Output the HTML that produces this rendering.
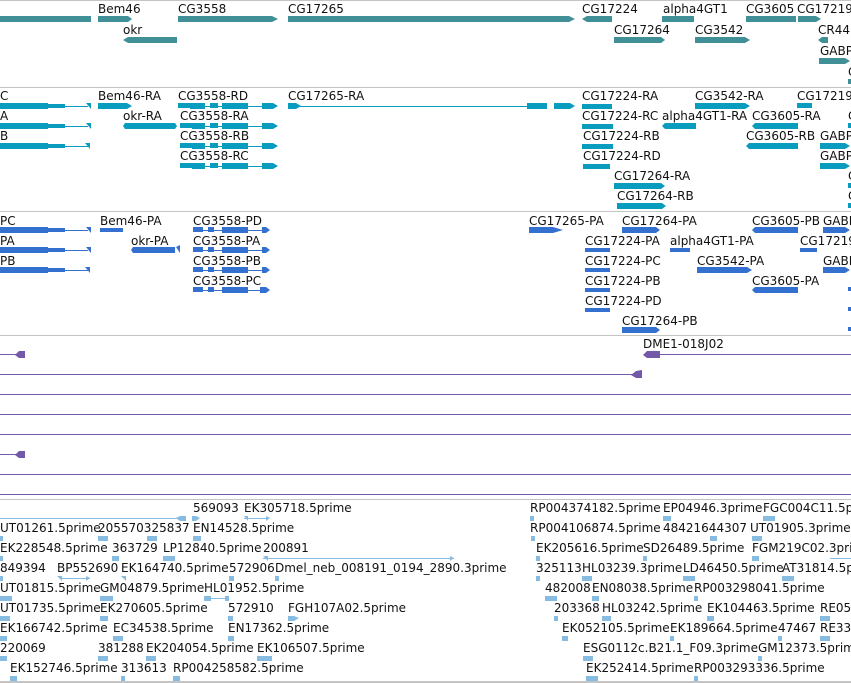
<!DOCTYPE html>
<html><head><meta charset="utf-8"><style>
html,body{margin:0;padding:0;background:#fff;width:851px;height:683px;overflow:hidden}
svg{display:block}
text{font-family:"DejaVu Sans","Liberation Sans",sans-serif;font-size:12px;fill:#111}
.t{fill:#418f97}.c{fill:#0a9cbf}.b{fill:#3470d0}.p{fill:#7458aa}.l{fill:#86bce2}
.lc{stroke:#0a9cbf}.lb{stroke:#3470d0}.lp{stroke:#7458aa}.ll{stroke:#86bce2}
</style></head><body>
<svg width="851" height="683" viewBox="0 0 851 683" xmlns="http://www.w3.org/2000/svg">
<!-- separators -->
<g fill="#c4c4c4">
<rect x="0" y="0" width="851" height="1"/>
<rect x="0" y="87" width="851" height="1"/>
<rect x="0" y="211" width="851" height="1"/>
<rect x="0" y="335" width="851" height="1"/>
<rect x="0" y="499" width="851" height="1"/>
<rect x="0" y="681" width="851" height="2"/>
</g>

<!-- Panel 1 genes -->
<g class="t">
<rect x="0" y="16" width="91" height="6"/>
<polygon points="98,16 128,16 132,19 128,22 98,22"/>
<polygon points="178,16 272,16 278,19 272,22 178,22"/>
<polygon points="288,16 569,16 575,19 569,22 288,22"/>
<polygon points="587,16 612,16 612,22 587,22 582,19"/>
<rect x="662" y="16" width="32" height="6"/>
<polygon points="746,16 796,16 796,22 746,22"/>
<polygon points="798,16 816,16 821,19 816,22 798,22"/>
<polygon points="128,37 177,37 177,43 128,43 123,40"/>
<polygon points="614,37 661,37 665,40 661,43 614,43"/>
<polygon points="695,37 745,37 750,40 745,43 695,43"/>
<polygon points="822,37 828,37 828,43 822,43 818,40"/>
<polygon points="819,58 845,58 850,61 845,64 819,64"/>
<rect x="848" y="79" width="3" height="5"/>
</g>
<text x="98" y="13">Bem46</text><text x="178" y="13">CG3558</text><text x="288" y="13">CG17265</text>
<text x="582" y="13">CG17224</text><text x="663" y="13">alpha4GT1</text><text x="746" y="13">CG3605</text><text x="797" y="13">CG17219</text>
<text x="123" y="34">okr</text><text x="614" y="34">CG17264</text><text x="695" y="34">CG3542</text><text x="818" y="34">CR44</text>
<text x="820" y="55">GABP</text><text x="848" y="76">C</text>

<!-- Panel 2 transcripts -->
<g class="c">
<rect x="0" y="103" width="48" height="6"/><rect x="48" y="104" width="17" height="4"/><polygon points="86,103 91,103 91,109"/>
<rect x="0" y="123" width="48" height="6"/><rect x="48" y="124" width="17" height="4"/><polygon points="86,123 91,123 91,129"/>
<rect x="0" y="143" width="48" height="6"/><rect x="48" y="144" width="17" height="4"/><polygon points="85,143 90,143 90,149"/>
<polygon points="98,103 127,103 132,106 127,109 98,109"/>
<rect x="178" y="103" width="13" height="5"/><rect x="190" y="103" width="15" height="6"/><rect x="210" y="103" width="8" height="5"/><rect x="222" y="103" width="18" height="6"/><rect x="240" y="103" width="8" height="6"/><polygon points="262,103 273,103 278,106 273,109 262,109"/>
<rect x="180" y="123" width="12" height="5"/><rect x="192" y="123" width="13" height="6"/><rect x="210" y="123" width="8" height="5"/><rect x="222" y="123" width="18" height="6"/><rect x="240" y="123" width="8" height="6"/><polygon points="262,123 273,123 278,126 273,129 262,129"/>
<rect x="180" y="143" width="12" height="5"/><rect x="192" y="143" width="13" height="6"/><rect x="210" y="143" width="8" height="5"/><rect x="222" y="143" width="18" height="6"/><rect x="240" y="143" width="8" height="6"/><polygon points="262,143 273,143 278,146 273,149 262,149"/>
<rect x="180" y="163" width="12" height="5"/><rect x="192" y="163" width="13" height="6"/><rect x="210" y="163" width="8" height="5"/><rect x="222" y="163" width="18" height="6"/><rect x="240" y="163" width="8" height="6"/><polygon points="262,163 273,163 278,166 273,169 262,169"/>
<polygon points="288,103 296,103 301,106 296,109 288,109"/><rect x="527" y="103" width="20" height="6"/><polygon points="554,103 570,103 575,106 570,109 554,109"/>
<polygon points="125,123 175,123 177,126 175,129 125,129 123,126"/>
<rect x="582" y="104" width="30" height="5"/><rect x="582" y="124" width="31" height="5"/><rect x="582" y="144" width="31" height="5"/><rect x="583" y="164" width="27" height="5"/>
<polygon points="695,103 745,103 750,106 745,109 695,109"/>
<rect x="797" y="103" width="15" height="5"/>
<polygon points="665,123 696,123 696,129 665,129 662,126"/>
<polygon points="755,123 798,123 798,129 755,129 752,126"/>
<polygon points="749,143 798,143 798,149 749,149 746,146"/>
<polygon points="820,143 845,143 850,146 845,149 820,149"/>
<polygon points="820,163 845,163 850,166 845,169 820,169"/>
<polygon points="614,183 661,183 665,186 661,189 614,189"/>
<polygon points="617,203 662,203 666,206 662,209 617,209"/>
<rect x="848" y="123" width="3" height="5"/><rect x="848" y="183" width="3" height="5"/><rect x="848" y="203" width="3" height="5"/>
</g>
<g class="lc" stroke-width="1">
<line x1="65" y1="106.5" x2="88" y2="106.5"/><line x1="65" y1="126.5" x2="88" y2="126.5"/><line x1="65" y1="146.5" x2="88" y2="146.5"/>
<line x1="178" y1="106.5" x2="270" y2="106.5"/><line x1="180" y1="126.5" x2="270" y2="126.5"/><line x1="180" y1="146.5" x2="270" y2="146.5"/><line x1="180" y1="166.5" x2="270" y2="166.5"/>
<line x1="296" y1="106.5" x2="530" y2="106.5"/>
</g>
<text x="0" y="100">C</text><text x="98" y="100">Bem46-RA</text><text x="178" y="100">CG3558-RD</text><text x="288" y="100">CG17265-RA</text><text x="582" y="100">CG17224-RA</text><text x="695" y="100">CG3542-RA</text><text x="797" y="100">CG17219</text>
<text x="0" y="120">A</text><text x="123" y="120">okr-RA</text><text x="180" y="120">CG3558-RA</text><text x="582" y="120">CG17224-RC</text><text x="662" y="120">alpha4GT1-RA</text><text x="752" y="120">CG3605-RA</text><text x="848" y="120">C</text>
<text x="0" y="140">B</text><text x="180" y="140">CG3558-RB</text><text x="583" y="140">CG17224-RB</text><text x="746" y="140">CG3605-RB</text><text x="820" y="140">GABP</text>
<text x="180" y="160">CG3558-RC</text><text x="583" y="160">CG17224-RD</text><text x="820" y="160">GABP</text>
<text x="614" y="180">CG17264-RA</text><text x="848" y="180">C</text>
<text x="617" y="200">CG17264-RB</text><text x="848" y="200">C</text>

<!-- Panel 3 -->
<g class="b">
<rect x="0" y="227" width="48" height="6"/><rect x="48" y="228" width="17" height="4"/><polygon points="86,227 91,227 91,233"/>
<rect x="0" y="247" width="48" height="6"/><rect x="48" y="248" width="17" height="4"/><polygon points="86,247 91,247 91,253"/>
<rect x="0" y="267" width="48" height="6"/><rect x="48" y="268" width="17" height="4"/><polygon points="85,267 90,267 90,273"/>
<rect x="100" y="228" width="23" height="4"/>
<polygon points="133,247 175,247 175,253 133,253 131,250"/><polygon points="176,247 180,245 180,253"/>
<rect x="193" y="227" width="10" height="5"/><rect x="208" y="227" width="6" height="5"/><rect x="222" y="227" width="18" height="6"/><rect x="240" y="227" width="8" height="6"/><polygon points="262,227 266,227 270,230 266,233 262,233"/>
<rect x="193" y="247" width="10" height="5"/><rect x="208" y="247" width="6" height="5"/><rect x="222" y="247" width="18" height="6"/><rect x="240" y="247" width="8" height="6"/><polygon points="262,247 266,247 270,250 266,253 262,253"/>
<rect x="193" y="267" width="10" height="5"/><rect x="208" y="267" width="6" height="5"/><rect x="222" y="267" width="18" height="6"/><rect x="240" y="267" width="8" height="6"/><polygon points="262,267 266,267 270,270 266,273 262,273"/>
<rect x="193" y="287" width="10" height="5"/><rect x="208" y="287" width="6" height="5"/><rect x="222" y="287" width="18" height="6"/><rect x="240" y="287" width="8" height="6"/><polygon points="260,287 266,287 270,290 266,293 260,293"/>
<polygon points="529,227 553,227 563,230 553,233 529,233"/>
<polygon points="622,227 656,227 660,230 656,233 622,233"/>
<polygon points="755,227 798,227 798,233 755,233 752,230"/>
<polygon points="823,227 845,227 850,230 845,233 823,233"/>
<rect x="585" y="248" width="25" height="4"/><rect x="585" y="268" width="25" height="4"/><rect x="585" y="288" width="25" height="4"/><rect x="585" y="308" width="25" height="4"/>
<rect x="670" y="248" width="20" height="4"/>
<rect x="800" y="248" width="17" height="4"/>
<polygon points="697,267 747,267 752,270 747,273 697,273"/>
<polygon points="823,267 845,267 850,270 845,273 823,273"/>
<polygon points="755,287 798,287 798,293 755,293 752,290"/>
<polygon points="622,327 656,327 660,330 656,333 622,333"/>
<rect x="848" y="287" width="3" height="4"/><rect x="848" y="307" width="3" height="4"/><rect x="848" y="327" width="3" height="4"/>
</g>
<g class="lb"><line x1="65" y1="230.5" x2="88" y2="230.5"/><line x1="65" y1="250.5" x2="88" y2="250.5"/><line x1="65" y1="270.5" x2="88" y2="270.5"/>
<line x1="193" y1="230.5" x2="268" y2="230.5"/><line x1="193" y1="250.5" x2="268" y2="250.5"/><line x1="193" y1="270.5" x2="268" y2="270.5"/><line x1="193" y1="290.5" x2="268" y2="290.5"/></g>
<text x="0" y="225">PC</text><text x="100" y="225">Bem46-PA</text><text x="193" y="225">CG3558-PD</text><text x="529" y="225">CG17265-PA</text><text x="622" y="225">CG17264-PA</text><text x="752" y="225">CG3605-PB</text><text x="823" y="225">GABP</text>
<text x="0" y="245">PA</text><text x="131" y="245">okr-PA</text><text x="193" y="245">CG3558-PA</text><text x="585" y="245">CG17224-PA</text><text x="670" y="245">alpha4GT1-PA</text><text x="800" y="245">CG17219</text>
<text x="0" y="265">PB</text><text x="193" y="265">CG3558-PB</text><text x="585" y="265">CG17224-PC</text><text x="697" y="265">CG3542-PA</text><text x="823" y="265">GABP</text>
<text x="193" y="285">CG3558-PC</text><text x="585" y="285">CG17224-PB</text><text x="752" y="285">CG3605-PA</text>
<text x="585" y="305">CG17224-PD</text>
<text x="622" y="325">CG17264-PB</text>

<!-- Panel 4 purple -->
<g class="lp" stroke-width="1">
<line x1="0" y1="354.5" x2="18" y2="354.5"/><line x1="655" y1="354.5" x2="851" y2="354.5"/>
<line x1="0" y1="374.5" x2="635" y2="374.5"/>
<line x1="0" y1="394.5" x2="851" y2="394.5"/><line x1="0" y1="414.5" x2="851" y2="414.5"/><line x1="0" y1="434.5" x2="851" y2="434.5"/>
<line x1="0" y1="454.5" x2="18" y2="454.5"/>
<line x1="0" y1="474.5" x2="851" y2="474.5"/><line x1="0" y1="494.5" x2="851" y2="494.5"/>
</g>
<g class="p">
<polygon points="19,351 25,351 25,358 19,358 15,355"/>
<polygon points="19,451 25,451 25,458 19,458 15,455"/>
<polygon points="647,351 660,351 660,358 647,358 643,355"/>
<polygon points="636,371 642,370 642,378 636,378 631,375"/>
</g>
<text x="643" y="348">DME1-018J02</text>

<!-- Panel 5 ESTs -->
<g class="ll"><line x1="0" y1="518.5" x2="182" y2="518.5"/><line x1="244" y1="518.5" x2="268" y2="518.5"/><line x1="263" y1="558.5" x2="454" y2="558.5"/><line x1="60" y1="578.5" x2="90" y2="578.5"/><line x1="210" y1="598.5" x2="228" y2="598.5"/><line x1="830" y1="558.5" x2="851" y2="558.5"/></g>
<g class="l">
<polygon points="180,516 186,516 186,521 180,521 176,518"/><polygon points="192,516 196,516 200,518 196,521 192,521"/><polygon points="244,516 248,516 248,521"/><polygon points="266,516 270,518 266,521"/>
<rect x="98" y="536" width="10" height="5"/><rect x="147" y="536" width="10" height="5"/><rect x="193" y="536" width="8" height="5"/>
<rect x="0" y="536" width="3" height="5"/><rect x="0" y="556" width="3" height="5"/><rect x="112" y="556" width="7" height="5"/><rect x="163" y="556" width="12" height="5"/><polygon points="263,556 268,556 268,561"/><polygon points="450,556 454,558 450,561"/>
<rect x="0" y="576" width="3" height="5"/><polygon points="57,576 62,576 62,581"/><polygon points="86,576 90,578 86,581"/><polygon points="121,576 126,576 126,581"/><rect x="229" y="576" width="5" height="5"/><rect x="275" y="576" width="4" height="5"/>
<rect x="0" y="596" width="12" height="5"/><rect x="100" y="596" width="13" height="5"/><rect x="204" y="596" width="7" height="5"/><rect x="225" y="596" width="4" height="5"/>
<rect x="0" y="616" width="10" height="5"/><rect x="100" y="616" width="8" height="5"/><rect x="228" y="616" width="5" height="5"/><polygon points="288,616 294,616 299,618 294,621 288,621"/>
<rect x="0" y="636" width="7" height="5"/><rect x="113" y="636" width="10" height="5"/><rect x="228" y="636" width="6" height="5"/>
<rect x="0" y="656" width="7" height="5"/><rect x="98" y="656" width="10" height="5"/><rect x="146" y="656" width="10" height="5"/><rect x="257" y="656" width="15" height="5"/>
<rect x="10" y="676" width="7" height="5"/><rect x="121" y="676" width="4" height="5"/><rect x="173" y="676" width="7" height="5"/>
<rect x="530" y="516" width="4" height="5"/><rect x="663" y="516" width="8" height="5"/><rect x="763" y="516" width="12" height="5"/>
<rect x="531" y="536" width="4" height="5"/><rect x="710" y="536" width="7" height="5"/><rect x="752" y="536" width="10" height="5"/>
<rect x="536" y="556" width="4" height="5"/><rect x="643" y="556" width="4" height="5"/><rect x="752" y="556" width="7" height="5"/>
<rect x="536" y="576" width="4" height="5"/><rect x="582" y="576" width="10" height="5"/><rect x="683" y="576" width="12" height="5"/><rect x="782" y="576" width="12" height="5"/>
<rect x="545" y="596" width="12" height="5"/><rect x="592" y="596" width="7" height="5"/><rect x="694" y="596" width="4" height="5"/>
<rect x="554" y="616" width="4" height="5"/><rect x="602" y="616" width="9" height="5"/><rect x="707" y="616" width="7" height="5"/><rect x="820" y="616" width="10" height="5"/>
<rect x="562" y="636" width="6" height="5"/><rect x="670" y="636" width="4" height="5"/><rect x="778" y="636" width="4" height="5"/><rect x="820" y="636" width="10" height="5"/>
<rect x="583" y="656" width="10" height="5"/><rect x="758" y="656" width="4" height="5"/>
<rect x="586" y="676" width="12" height="5"/><rect x="694" y="676" width="4" height="5"/>
</g>
<text x="193" y="512">569093</text><text x="244" y="512">EK305718.5prime</text><text x="530" y="512">RP004374182.5prime</text><text x="663" y="512">EP04946.3prime</text><text x="763" y="512">FGC004C11.5prime</text>
<text x="0" y="532">UT01261.5prime</text><text x="98" y="532">205570325837</text><text x="193" y="532">EN14528.5prime</text><text x="530" y="532">RP004106874.5prime</text><text x="663" y="532">48421644307</text><text x="750" y="532">UT01905.3prime</text>
<text x="0" y="552">EK228548.5prime</text><text x="112" y="552">363729</text><text x="163" y="552">LP12840.5prime</text><text x="263" y="552">200891</text><text x="536" y="552">EK205616.5prime</text><text x="643" y="552">SD26489.5prime</text><text x="752" y="552">FGM219C02.3prime</text>
<text x="0" y="572">849394</text><text x="57" y="572">BP552690</text><text x="121" y="572">EK164740.5prime</text><text x="229" y="572">572906</text><text x="275" y="572">Dmel_neb_008191_0194_2890.3prime</text><text x="536" y="572">325113</text><text x="582" y="572">HL03239.3prime</text><text x="683" y="572">LD46450.5prime</text><text x="782" y="572">AT31814.5prime</text>
<text x="0" y="592">UT01815.5prime</text><text x="100" y="592">GM04879.5prime</text><text x="204" y="592">HL01952.5prime</text><text x="545" y="592">482008</text><text x="592" y="592">EN08038.5prime</text><text x="694" y="592">RP003298041.5prime</text>
<text x="0" y="612">UT01735.5prime</text><text x="100" y="612">EK270605.5prime</text><text x="228" y="612">572910</text><text x="288" y="612">FGH107A02.5prime</text><text x="554" y="612">203368</text><text x="602" y="612">HL03242.5prime</text><text x="707" y="612">EK104463.5prime</text><text x="820" y="612">RE05</text>
<text x="0" y="632">EK166742.5prime</text><text x="113" y="632">EC34538.5prime</text><text x="228" y="632">EN17362.5prime</text><text x="562" y="632">EK052105.5prime</text><text x="670" y="632">EK189664.5prime</text><text x="778" y="632">47467</text><text x="820" y="632">RE33</text>
<text x="0" y="652">220069</text><text x="98" y="652">381288</text><text x="146" y="652">EK204054.5prime</text><text x="257" y="652">EK106507.5prime</text><text x="583" y="652">ESG0112c.B21.1_F09.3prime</text><text x="758" y="652">GM12373.5prime</text>
<text x="10" y="672">EK152746.5prime</text><text x="121" y="672">313613</text><text x="173" y="672">RP004258582.5prime</text><text x="586" y="672">EK252414.5prime</text><text x="694" y="672">RP003293336.5prime</text>
</svg>
</body></html>
